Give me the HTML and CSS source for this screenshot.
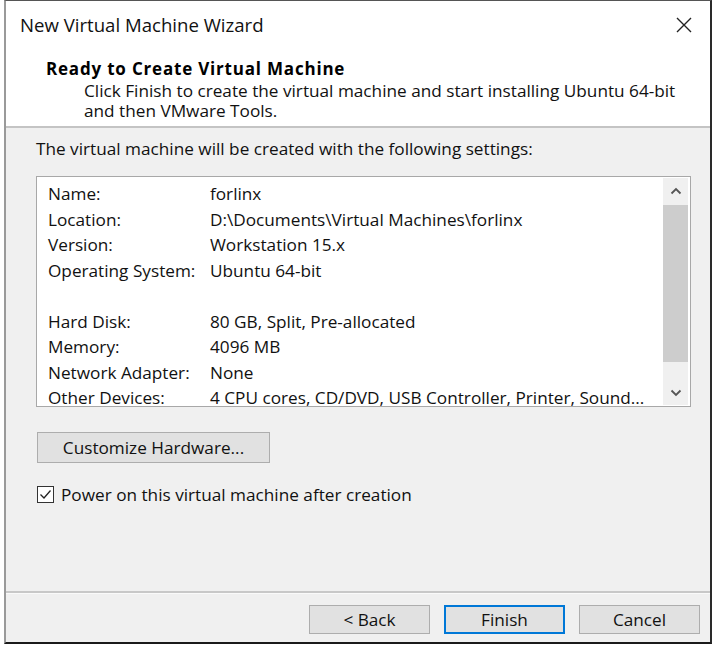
FILE: index.html
```html
<!DOCTYPE html>
<html lang="en">
  <head>
    <meta charset="UTF-8" />
    <title>New Virtual Machine Wizard</title>
    <link rel="stylesheet" href="styles.css">
  </head>
  <body>
    <div class="window">
      <div class="titlebar">
        <span class="title">New Virtual Machine Wizard</span>
        <span class="close">
          <svg width="16" height="16" viewBox="0 0 16 16">
            <path d="M1 1 L15 15 M15 1 L1 15" stroke="#222" stroke-width="1.4" fill="none" />
          </svg>
        </span>
      </div>

      <div class="header">
        <h2>Ready to Create Virtual Machine</h2>
        <p>Click Finish to create the virtual machine and start installing Ubuntu 64-bit<br>and then VMware Tools.</p>
      </div>

      <div class="content">
        <p class="intro">The virtual machine will be created with the following settings:</p>

        <div class="listbox">
          <div class="rows">
            <div class="row"><span class="label">Name:</span><span>forlinx</span></div>
            <div class="row"><span class="label">Location:</span><span>D:\Documents\Virtual Machines\forlinx</span></div>
            <div class="row"><span class="label">Version:</span><span>Workstation 15.x</span></div>
            <div class="row"><span class="label">Operating System:</span><span>Ubuntu 64-bit</span></div>
            <div class="row"></div>
            <div class="row"><span class="label">Hard Disk:</span><span>80 GB, Split, Pre-allocated</span></div>
            <div class="row"><span class="label">Memory:</span><span>4096 MB</span></div>
            <div class="row"><span class="label">Network Adapter:</span><span>None</span></div>
            <div class="row"><span class="label">Other Devices:</span><span>4 CPU cores, CD/DVD, USB Controller, Printer, Sound...</span></div>
          </div>
          <div class="scrollbar">
            <div class="arrow">
              <svg width="12" height="8" viewBox="0 0 12 8">
                <path d="M1.5 6.5 L6 2 L10.5 6.5" stroke="#555" stroke-width="1.8" fill="none" />
              </svg>
            </div>
            <div class="track"><div class="thumb"></div></div>
            <div class="arrow">
              <svg width="12" height="8" viewBox="0 0 12 8">
                <path d="M1.5 1.5 L6 6 L10.5 1.5" stroke="#555" stroke-width="1.8" fill="none" />
              </svg>
            </div>
          </div>
        </div>

        <button class="btn customize">Customize Hardware...</button>

        <label class="check">
          <span class="box">
            <svg width="15" height="15" viewBox="0 0 15 15">
              <path d="M2.5 7.5 L6 11 L12.5 3.5" stroke="#222" stroke-width="1.3" fill="none" />
            </svg>
          </span>
          Power on this virtual machine after creation
        </label>
      </div>

      <div class="footer">
        <button class="btn">&lt; Back</button>
        <button class="btn primary">Finish</button>
        <button class="btn">Cancel</button>
      </div>
    </div>
  </body>
</html>
```

FILE: styles.css
```css
body {
  margin: 0;
  padding: 0;
  background-color: #fff;
  font-family: "Open Sans", "Noto Sans", sans-serif;
  font-size: 17.2px;
  color: #111;
}

.window {
  margin-left: 4px;
  width: 704px;
  height: 641px;
  border-top: 1px solid #555;
  border-left: 2px solid #9a9a9a;
  border-right: 2px solid #2a2a2a;
  border-bottom: 2px solid #1a1a1a;
  background-color: #f0f0f0;
  display: flex;
  flex-direction: column;
}

.titlebar {
  height: 47px;
  background-color: #fff;
  display: flex;
  align-items: center;
  justify-content: space-between;
  padding: 0 18px 0 14px;
}

.title {
  font-size: 18.6px;
  color: #111;
  padding-bottom: 1px;
}

.close {
  display: flex;
}

.header {
  height: 78px;
  background-color: #fff;
  padding-left: 40px;
  border-bottom: 2px solid #c4c4c4;
}

.header h2 {
  margin: 11px 0 0;
  font-size: 17px;
  font-weight: bold;
  letter-spacing: 0.8px;
  line-height: 20px;
  color: #000;
}

.header p {
  margin: 2px 0 0 38px;
  line-height: 19.5px;
}

.content {
  flex: 1;
  padding: 0 15px 0 30px;
  border-bottom: 2px solid #c8c8c8;
}

.intro {
  margin: 11px 0 0;
  line-height: 20px;
}

.listbox {
  margin-top: 17px;
  width: 655px;
  height: 231px;
  border: 1px solid #a8a8a8;
  background-color: #fff;
  display: flex;
  box-sizing: border-box;
}

.rows {
  flex: 1;
  padding: 4px 0 0 11px;
}

.row {
  height: 25.5px;
  line-height: 25.5px;
  display: flex;
  white-space: nowrap;
}

.label {
  width: 162px;
}

.scrollbar {
  width: 25px;
  margin: 1px 2px 1px 0;
  background-color: #f0f0f0;
  display: flex;
  flex-direction: column;
}

.arrow {
  height: 25px;
  display: flex;
  align-items: center;
  justify-content: center;
}

.track {
  flex: 1;
}

.thumb {
  margin-top: 2px;
  height: 157px;
  background-color: #cdcdcd;
}

.btn {
  font-family: inherit;
  font-size: 17.2px;
  color: #111;
  background-color: #e1e1e1;
  border: 1px solid #adadad;
  padding: 0;
  cursor: pointer;
}

.customize {
  display: block;
  margin-top: 25px;
  margin-left: 1px;
  width: 233px;
  height: 31px;
}

.check {
  margin-top: 20px;
  display: flex;
  align-items: center;
  gap: 7px;
}

.box {
  width: 15px;
  height: 15px;
  border: 1px solid #333;
  background-color: #fff;
  margin-left: 1px;
  display: flex;
}

.footer {
  height: 49px;
  display: flex;
  justify-content: flex-end;
  align-items: flex-start;
  gap: 14px;
  padding: 11px 10px 0 0;
  box-sizing: border-box;
  border-top: 1px solid #fafafa;
}

.footer .btn {
  width: 121px;
  height: 29px;
}

.footer .primary {
  border: 2px solid #0078d7;
}
```
